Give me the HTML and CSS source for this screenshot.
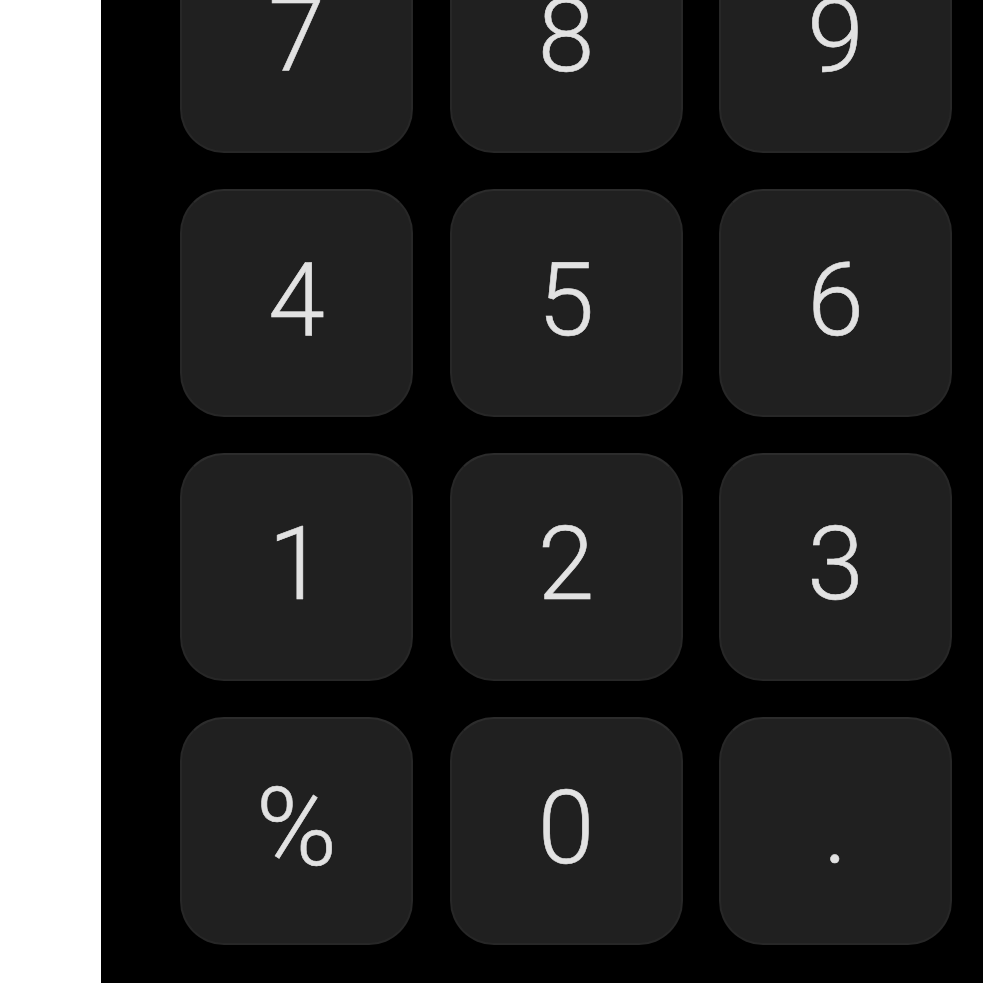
FILE: index.html
```html
<!DOCTYPE html>
<html>
<head>
<meta charset="utf-8">
<link rel="stylesheet" href="styles.css">
</head>
<body>
<div class="panel">
  <div class="keypad">
    <div class="key">7</div>
    <div class="key">8</div>
    <div class="key">9</div>
    <div class="key">4</div>
    <div class="key">5</div>
    <div class="key">6</div>
    <div class="key">1</div>
    <div class="key">2</div>
    <div class="key">3</div>
    <div class="key key-pct">%</div>
    <div class="key">0</div>
    <div class="key">.</div>
  </div>
</div>
</body>
</html>
```
FILE: styles.css
```css
html, body {
  margin: 0;
  padding: 0;
  background: #ffffff;
  height: 100%;
}
.panel {
  margin-left: 101px;
  height: 983px;
  background: #000000;
  box-sizing: border-box;
  padding: 0 31px 38px 79px;
  display: flex;
  flex-direction: column;
  justify-content: flex-end;
  overflow: hidden;
}
.keypad {
  display: grid;
  grid-template-columns: 233px 233px 233px;
  grid-auto-rows: 228px;
  column-gap: 36.5px;
  row-gap: 36px;
  flex-shrink: 0;
}
.key {
  box-sizing: border-box;
  background: #202020;
  border: 2px solid #272727;
  border-top-color: #2c2c2c;
  border-radius: 44px;
  display: flex;
  align-items: center;
  justify-content: center;
  color: #e2e2e2;
  font-family: Roboto, "Noto Sans", sans-serif;
  font-weight: 300;
  font-size: 102px;
  line-height: 1;
  padding-bottom: 6px;
  -webkit-text-stroke: 0.6px #e2e2e2;
}
.key-pct {
  font-size: 110px;
}
```
